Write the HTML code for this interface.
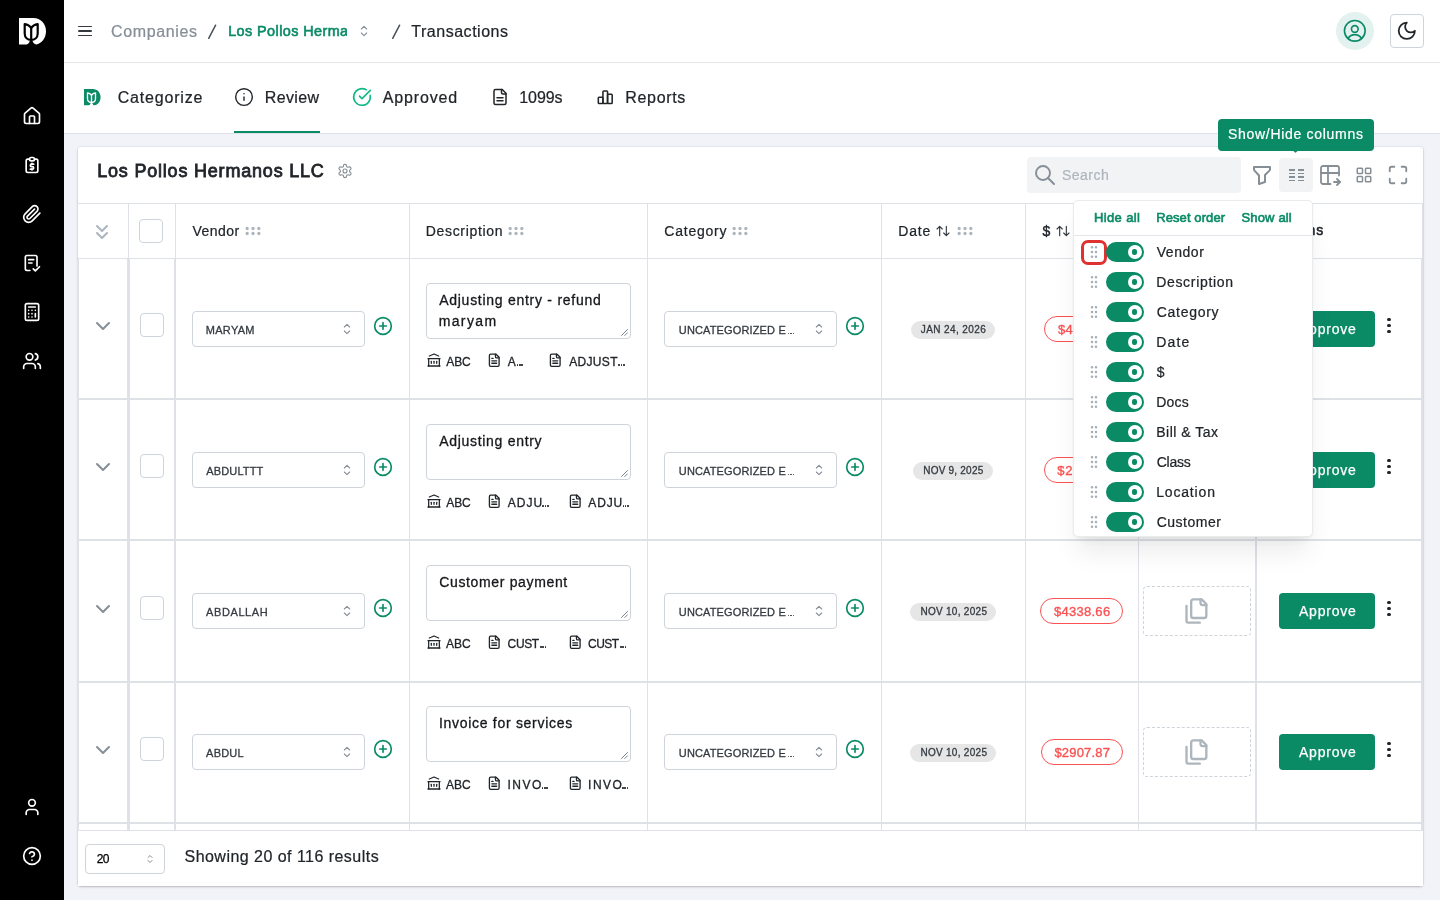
<!DOCTYPE html>
<html><head><meta charset="utf-8"><title>Transactions</title><style>
*{box-sizing:border-box;margin:0;padding:0}
html,body{width:1440px;height:900px;overflow:hidden}
body{font-family:"Liberation Sans",sans-serif;background:#f1f3f9;color:#212529;position:relative;-webkit-font-smoothing:antialiased}
#root{position:absolute;left:0;top:0;width:1440px;height:900px;will-change:transform}
.abs{position:absolute}
.t{position:absolute;white-space:nowrap;line-height:1}
svg{position:absolute;overflow:visible;fill:none;stroke-linecap:round;stroke-linejoin:round}
.sidebar{position:absolute;left:0;top:0;width:64px;height:900px;background:#000}
.sidebar svg{stroke:#fff;stroke-width:2}
.topbar{position:absolute;left:64px;top:0;width:1376px;height:63px;background:#fff;border-bottom:1px solid #e6e7e9}
.tabs{position:absolute;left:64px;top:63px;width:1376px;height:71px;background:#fff;border-bottom:1px solid #dfe1e6}
.card{position:absolute;left:78px;top:147px;width:1345px;height:739px;background:#fff;box-shadow:0 0 0 1px rgba(0,0,0,.04),0 1px 3px rgba(0,0,0,.13),0 1px 2px rgba(0,0,0,.1);border-radius:3px}
.vl{position:absolute;background:#dee2e6;width:1px}
.hl{position:absolute;background:#dee2e6;height:1px}
.cb{position:absolute;width:24px;height:24px;border:1px solid #ced4da;border-radius:4px;background:#fff}
.sel{position:absolute;height:36px;border:1px solid #ced4da;border-radius:4px;background:#fff}
.ta{position:absolute;width:205px;height:56px;border:1px solid #ced4da;border-radius:4px;background:#fff}
.badge{position:absolute;height:18px;border-radius:9px;background:#e6e6e6}
.amt{position:absolute;height:26px;border-radius:13px;border:1px solid #fa5252;background:#fff}
.docs{position:absolute;width:107px;height:49px;border:1px dashed #ced4da;border-radius:4px}
.btn{position:absolute;width:96px;height:36px;border-radius:4px;background:#0b8a66}
.dot{position:absolute;width:4px;height:4px;border-radius:2px;background:#212529}
.sw{position:absolute;width:38px;height:20px;border-radius:10px;background:#0b8a66}
.sw i{position:absolute;left:22px;top:3px;width:14px;height:14px;border-radius:7px;background:#fff}
.sw b{position:absolute;left:26.2px;top:7.2px;width:5px;height:5.8px;border-radius:2.2px;background:#0b8a66}
</style></head><body><div id="root">
<div class="sidebar">
<svg style="left:18.7px;top:17.6px;stroke:none" width="27" height="27" viewBox="0 0 27 27"><path fill="#fff" d="M0 0H14.5C21.5 0 27 5.8 27 13.3C27 20.5 22.5 25.6 17.2 26.6C15.4 26.2 14 24.8 13.5 23H10.7C10.3 24.8 9.3 26 7.6 26.6H0Z"/><path fill="none" stroke="#000" stroke-width="2.2" stroke-linejoin="round" d="M5.7 6.2V15.5C5.7 19.5 8.6 21.9 12.2 22C15.8 21.9 18.7 19.5 18.7 15.5V6.2C15.8 6.6 13.6 7.9 12.2 10C10.8 7.9 8.6 6.6 5.7 6.2Z"/><path fill="none" stroke="#000" stroke-width="2.2" d="M12.2 10V27"/></svg>
<svg style="left:22px;top:106.0px;" width="20" height="20" viewBox="0 0 24 24"><path d="M15 21v-8a1 1 0 0 0-1-1h-4a1 1 0 0 0-1 1v8"/><path d="M3 10a2 2 0 0 1 .709-1.528l7-5.999a2 2 0 0 1 2.582 0l7 5.999A2 2 0 0 1 21 10v9a2 2 0 0 1-2 2H5a2 2 0 0 1-2-2z"/></svg>
<svg style="left:22px;top:155px;" width="20" height="20" viewBox="0 0 24 24"><path d="M9 5H7a2 2 0 0 0-2 2v12a2 2 0 0 0 2 2h10a2 2 0 0 0 2-2V7a2 2 0 0 0-2-2h-2"/><rect x="9" y="3" width="6" height="4" rx="2"/><path d="M14 11h-2.5a1.5 1.5 0 0 0 0 3h1a1.5 1.5 0 0 1 0 3H10"/><path d="M12 17v1m0-8v1"/></svg>
<svg style="left:22px;top:203.9px;" width="20" height="20" viewBox="0 0 24 24"><path d="m21.44 11.05-9.19 9.19a6 6 0 0 1-8.49-8.49l8.57-8.57A4 4 0 1 1 18 8.84l-8.59 8.57a2 2 0 0 1-2.83-2.83l8.49-8.48"/></svg>
<svg style="left:22px;top:253.3px;" width="20" height="20" viewBox="0 0 24 24"><path d="M9.5 21H6a2 2 0 0 1-2-2V5a2 2 0 0 1 2-2h10a2 2 0 0 1 2 2v10.5"/><path d="M8 8h6"/><path d="M8 12h4"/><path d="m13.5 19 2.5 2.5 5-5"/></svg>
<svg style="left:22px;top:301.8px;" width="20" height="20" viewBox="0 0 24 24"><rect x="4" y="2" width="16" height="20" rx="2"/><path d="M8 6h8"/><path d="M16 14v4"/><path d="M16 10h.01M12 10h.01M8 10h.01M12 14h.01M8 14h.01M12 18h.01M8 18h.01"/></svg>
<svg style="left:22px;top:351px;" width="20" height="20" viewBox="0 0 24 24"><path d="M16 21v-2a4 4 0 0 0-4-4H6a4 4 0 0 0-4 4v2"/><circle cx="9" cy="7" r="4"/><path d="M22 21v-2a4 4 0 0 0-3-3.87"/><path d="M16 3.13a4 4 0 0 1 0 7.75"/></svg>
<svg style="left:22px;top:797px;" width="20" height="20" viewBox="0 0 24 24"><path d="M19 21v-2a4 4 0 0 0-4-4H9a4 4 0 0 0-4 4v2"/><circle cx="12" cy="7" r="4"/></svg>
<svg style="left:22px;top:846px;" width="20" height="20" viewBox="0 0 24 24"><circle cx="12" cy="12" r="10"/><path d="M9.09 9a3 3 0 0 1 5.83 1c0 2-3 3-3 3"/><path d="M12 17h.01"/></svg>
</div>
<div class="topbar"></div>
<div class="abs" style="left:78px;top:25.7px;width:14px;height:1.6px;background:#343a40;border-radius:1px"></div>
<div class="abs" style="left:78px;top:30.2px;width:14px;height:1.6px;background:#343a40;border-radius:1px"></div>
<div class="abs" style="left:78px;top:34.7px;width:14px;height:1.6px;background:#343a40;border-radius:1px"></div>
<span class="t" style="left:111px;top:24px;font-size:16px;color:#868e96;font-weight:400;letter-spacing:0.625px;-webkit-text-stroke:0.22px #868e96;">Companies</span>
<svg style="left:200px;top:20px;stroke:#495057;stroke-width:1.5" width="24" height="24" viewBox="0 0 24 24"><path d="M8.7 18.3 15.6 5.2"/></svg>
<span class="abs" style="left:228px;top:20px;width:119px;height:22px;overflow:hidden"><span class="t" style="left:0.2px;top:4px;font-size:14.4px;color:#0b8a66;font-weight:400;letter-spacing:0.423px;-webkit-text-stroke:0.6px #0b8a66;">Los Pollos Hermanos LLC</span></span>
<svg style="left:356px;top:23px;stroke:#868e96;stroke-width:1.6;" width="16" height="16" viewBox="0 0 24 24"><path d="m8 9 4-4 4 4"/><path d="m16 15-4 4-4-4"/></svg>
<svg style="left:384px;top:20px;stroke:#495057;stroke-width:1.5" width="24" height="24" viewBox="0 0 24 24"><path d="M8.7 18.3 15.6 5.2"/></svg>
<span class="t" style="left:411.3px;top:24px;font-size:16px;color:#212529;font-weight:400;letter-spacing:0.518px;-webkit-text-stroke:0.22px #212529;">Transactions</span>
<div class="abs" style="left:1336px;top:12px;width:38px;height:38px;border-radius:19px;background:#e3f2ee"></div>
<svg style="left:1341px;top:16.75px;stroke:#0b8a66;stroke-width:1.4;" width="27.6" height="27.6" viewBox="0 0 24 24"><circle cx="12" cy="12" r="9"/><circle cx="12" cy="10.4" r="2.9"/><path d="M6 18.6C7.6 16.5 9.6 15.35 12 15.35s4.4 1.15 6 3.25"/></svg>
<div class="abs" style="left:1390px;top:14px;width:34px;height:34px;border-radius:4px;border:1px solid #ced4da;background:#fff"></div>
<svg style="left:1396.2px;top:20.1px;stroke:#212529;stroke-width:2;" width="21.6" height="21.6" viewBox="0 0 24 24"><path d="M12 3a6 6 0 0 0 9 9 9 9 0 1 1-9-9Z"/></svg>
<div class="tabs"></div>
<svg style="left:83.7px;top:88.7px;stroke:none" width="16.6" height="16.6" viewBox="0 0 27 27"><path fill="#0b8a66" d="M0 0H14.5C21.5 0 27 5.8 27 13.3C27 20.5 22.5 25.6 17.2 26.6C15.4 26.2 14 24.8 13.5 23H10.7C10.3 24.8 9.3 26 7.6 26.6H0Z"/><path fill="none" stroke="#fff" stroke-width="2.2" stroke-linejoin="round" d="M5.7 6.2V15.5C5.7 19.5 8.6 21.9 12.2 22C15.8 21.9 18.7 19.5 18.7 15.5V6.2C15.8 6.6 13.6 7.9 12.2 10C10.8 7.9 8.6 6.6 5.7 6.2Z"/><path fill="none" stroke="#fff" stroke-width="2.2" d="M12.2 10V27"/></svg>
<span class="t" style="left:117.7px;top:90px;font-size:16px;color:#212529;font-weight:400;letter-spacing:0.811px;-webkit-text-stroke:0.22px #212529;">Categorize</span>
<svg style="left:234px;top:86.8px;stroke:#212529;stroke-width:1.7;" width="20" height="20" viewBox="0 0 24 24"><circle cx="12" cy="12" r="10"/><path d="M12 16v-4"/><path d="M12 8h.01"/></svg>
<span class="t" style="left:264.8px;top:90px;font-size:16px;color:#212529;font-weight:400;letter-spacing:0.34px;-webkit-text-stroke:0.22px #212529;">Review</span>
<div class="abs" style="left:234px;top:131px;width:86px;height:2px;background:#0b8a66"></div>
<svg style="left:352px;top:86.8px;stroke:#12b886;stroke-width:1.9;" width="20" height="20" viewBox="0 0 24 24"><path d="M21.801 10A10 10 0 1 1 17 3.335"/><path d="m9 11 3 3L22 4"/></svg>
<span class="t" style="left:382.8px;top:90px;font-size:16px;color:#212529;font-weight:400;letter-spacing:0.843px;-webkit-text-stroke:0.22px #212529;">Approved</span>
<svg style="left:491px;top:87.8px;stroke:#212529;stroke-width:2;" width="18" height="18" viewBox="0 0 24 24"><path d="M15 2H6a2 2 0 0 0-2 2v16a2 2 0 0 0 2 2h12a2 2 0 0 0 2-2V7Z"/><path d="M14 2v4a2 2 0 0 0 2 2h4"/><path d="M16 13H8"/><path d="M16 17H8"/></svg>
<span class="t" style="left:519.3px;top:90px;font-size:16px;color:#212529;font-weight:400;letter-spacing:-0.075px;-webkit-text-stroke:0.22px #212529;">1099s</span>
<svg style="left:595.5px;top:88px;stroke:#212529;stroke-width:2;" width="18.5" height="18.5" viewBox="0 0 24 24"><rect x="3" y="12" width="6" height="8" rx="1"/><rect x="9" y="4" width="6" height="16" rx="1"/><rect x="15" y="8" width="6" height="12" rx="1"/></svg>
<span class="t" style="left:625.3px;top:90px;font-size:16px;color:#212529;font-weight:400;letter-spacing:0.667px;-webkit-text-stroke:0.22px #212529;">Reports</span>
<div class="card"></div>
<span class="t" style="left:97.2px;top:162px;font-size:18px;color:#212529;font-weight:400;letter-spacing:0.798px;-webkit-text-stroke:0.8px #212529;">Los Pollos Hermanos LLC</span>
<svg style="left:337px;top:163px;stroke:#868e96;stroke-width:1.7;" width="16" height="16" viewBox="0 0 24 24"><path d="M12.22 2h-.44a2 2 0 0 0-2 2v.18a2 2 0 0 1-1 1.73l-.43.25a2 2 0 0 1-2 0l-.15-.08a2 2 0 0 0-2.73.73l-.22.38a2 2 0 0 0 .73 2.73l.15.1a2 2 0 0 1 1 1.72v.51a2 2 0 0 1-1 1.74l-.15.09a2 2 0 0 0-.73 2.73l.22.38a2 2 0 0 0 2.73.73l.15-.08a2 2 0 0 1 2 0l.43.25a2 2 0 0 1 1 1.73V20a2 2 0 0 0 2 2h.44a2 2 0 0 0 2-2v-.18a2 2 0 0 1 1-1.73l.43-.25a2 2 0 0 1 2 0l.15.08a2 2 0 0 0 2.73-.73l.22-.39a2 2 0 0 0-.73-2.73l-.15-.08a2 2 0 0 1-1-1.74v-.5a2 2 0 0 1 1-1.74l.15-.09a2 2 0 0 0 .73-2.73l-.22-.38a2 2 0 0 0-2.73-.73l-.15.08a2 2 0 0 1-2 0l-.43-.25a2 2 0 0 1-1-1.73V4a2 2 0 0 0-2-2z"/><circle cx="12" cy="12" r="3"/></svg>
<div class="abs" style="left:1027px;top:157px;width:214px;height:36px;border-radius:4px;background:#f1f3f5"></div>
<svg style="left:1033px;top:163.4px;stroke:#868e96;stroke-width:1.9;" width="24" height="24" viewBox="0 0 24 24"><circle cx="10" cy="10" r="7"/><path d="m21 21-6-6"/></svg>
<span class="t" style="left:1061.9px;top:168px;font-size:14px;color:#adb5bd;font-weight:400;letter-spacing:0.5px;-webkit-text-stroke:0.22px #adb5bd;">Search</span>
<svg style="left:1250px;top:163.2px;stroke:#868e96;stroke-width:2;" width="24" height="24" viewBox="0 0 24 24"><path d="M4 4h16v2.172a2 2 0 0 1-.586 1.414L15 12v7l-6 2v-8.5L4.52 7.572A2 2 0 0 1 4 6.227z"/></svg>
<div class="abs" style="left:1279px;top:158px;width:34px;height:34px;border-radius:4px;background:#f1f3f5"></div>
<div class="abs" style="left:1288.5px;top:169.4px;width:6px;height:1.6px;background:#868e96"></div>
<div class="abs" style="left:1288.5px;top:172.9px;width:6px;height:1.6px;background:#868e96"></div>
<div class="abs" style="left:1288.5px;top:176.4px;width:6px;height:1.6px;background:#868e96"></div>
<div class="abs" style="left:1288.5px;top:179.9px;width:6px;height:1.6px;background:#868e96"></div>
<div class="abs" style="left:1297.7px;top:169.4px;width:6px;height:1.6px;background:#868e96"></div>
<div class="abs" style="left:1297.7px;top:172.9px;width:6px;height:1.6px;background:#868e96"></div>
<div class="abs" style="left:1297.7px;top:176.4px;width:6px;height:1.6px;background:#868e96"></div>
<div class="abs" style="left:1297.7px;top:179.9px;width:6px;height:1.6px;background:#868e96"></div>
<svg style="left:1318px;top:163px;stroke:#868e96;stroke-width:1.8;" width="24" height="24" viewBox="0 0 24 24"><path d="M12.5 21H5a2 2 0 0 1-2-2V5a2 2 0 0 1 2-2h14a2 2 0 0 1 2 2v7.5"/><path d="M3 10h18"/><path d="M10 3v18"/><path d="M16 19h6"/><path d="m19 16 3 3-3 3"/></svg>
<svg style="left:1355px;top:166px;stroke:#868e96;stroke-width:2;" width="18" height="18" viewBox="0 0 24 24"><rect x="3" y="3" width="7" height="7" rx="1"/><rect x="14" y="3" width="7" height="7" rx="1"/><rect x="14" y="14" width="7" height="7" rx="1"/><rect x="3" y="14" width="7" height="7" rx="1"/></svg>
<svg style="left:1387px;top:164px;stroke:#868e96;stroke-width:2;" width="22" height="22" viewBox="0 0 24 24"><path d="M8 3H5a2 2 0 0 0-2 2v3"/><path d="M21 8V5a2 2 0 0 0-2-2h-3"/><path d="M3 16v3a2 2 0 0 0 2 2h3"/><path d="M16 21h3a2 2 0 0 0 2-2v-3"/></svg>
<div class="hl" style="left:78px;top:203px;width:1345px"></div>
<div class="hl" style="left:78px;top:258px;width:1345px"></div>
<div class="vl" style="left:128px;top:204px;height:54px"></div>
<div class="vl" style="left:175px;top:204px;height:54px"></div>
<div class="vl" style="left:409px;top:204px;height:54px"></div>
<div class="vl" style="left:647px;top:204px;height:54px"></div>
<div class="vl" style="left:881px;top:204px;height:54px"></div>
<div class="vl" style="left:1025px;top:204px;height:54px"></div>
<div class="vl" style="left:1138px;top:204px;height:54px"></div>
<div class="vl" style="left:1255px;top:204px;height:54px"></div>
<div class="vl" style="left:1422px;top:204px;height:54px"></div>
<div class="vl" style="left:77px;top:259px;height:571px;width:2px"></div>
<div class="vl" style="left:127px;top:259px;height:571px;width:3px"></div>
<div class="vl" style="left:174px;top:259px;height:571px;width:2px"></div>
<div class="vl" style="left:409px;top:259px;height:571px;width:1px"></div>
<div class="vl" style="left:647px;top:259px;height:571px;width:1px"></div>
<div class="vl" style="left:881px;top:259px;height:571px;width:1px"></div>
<div class="vl" style="left:1025px;top:259px;height:571px;width:1px"></div>
<div class="vl" style="left:1138px;top:259px;height:571px;width:1px"></div>
<div class="vl" style="left:1255px;top:259px;height:571px;width:2px"></div>
<div class="vl" style="left:1421px;top:259px;height:571px;width:2px"></div>
<div class="hl" style="left:78px;top:398px;width:1345px;height:2px"></div>
<div class="hl" style="left:78px;top:539px;width:1345px;height:2px"></div>
<div class="hl" style="left:78px;top:681px;width:1345px;height:2px"></div>
<div class="hl" style="left:78px;top:822px;width:1345px;height:2px"></div>
<svg style="left:90px;top:219.5px;stroke:#adb5bd;stroke-width:2;" width="24" height="24" viewBox="0 0 24 24"><path d="m7 6 5 5 5-5"/><path d="m7 13 5 5 5-5"/></svg>
<div class="cb" style="left:139px;top:219px"></div>
<span class="t" style="left:192.5px;top:224px;font-size:14px;color:#212529;font-weight:400;letter-spacing:0.44px;-webkit-text-stroke:0.22px #212529;">Vendor</span>
<svg style="left:243.0px;top:221.4px;stroke:#adb5bd;stroke-width:2;" width="20" height="20" viewBox="0 0 24 24"><circle cx="5" cy="9" r="1"/><circle cx="12" cy="9" r="1"/><circle cx="19" cy="9" r="1"/><circle cx="5" cy="15" r="1"/><circle cx="12" cy="15" r="1"/><circle cx="19" cy="15" r="1"/></svg>
<span class="t" style="left:425.75px;top:224px;font-size:14px;color:#212529;font-weight:400;letter-spacing:0.675px;-webkit-text-stroke:0.22px #212529;">Description</span>
<svg style="left:505.7px;top:221.4px;stroke:#adb5bd;stroke-width:2;" width="20" height="20" viewBox="0 0 24 24"><circle cx="5" cy="9" r="1"/><circle cx="12" cy="9" r="1"/><circle cx="19" cy="9" r="1"/><circle cx="5" cy="15" r="1"/><circle cx="12" cy="15" r="1"/><circle cx="19" cy="15" r="1"/></svg>
<span class="t" style="left:664.25px;top:224px;font-size:14px;color:#212529;font-weight:400;letter-spacing:0.786px;-webkit-text-stroke:0.22px #212529;">Category</span>
<svg style="left:730.0px;top:221.4px;stroke:#adb5bd;stroke-width:2;" width="20" height="20" viewBox="0 0 24 24"><circle cx="5" cy="9" r="1"/><circle cx="12" cy="9" r="1"/><circle cx="19" cy="9" r="1"/><circle cx="5" cy="15" r="1"/><circle cx="12" cy="15" r="1"/><circle cx="19" cy="15" r="1"/></svg>
<span class="t" style="left:898.2px;top:224px;font-size:14px;color:#212529;font-weight:400;letter-spacing:0.833px;-webkit-text-stroke:0.22px #212529;">Date</span>
<svg style="left:935.4px;top:223.1px;stroke:#343a40;stroke-width:1.7;" width="16" height="16" viewBox="0 0 24 24"><path d="m3 9 4-4 4 4m-4-4v14"/><path d="m21 15-4 4-4-4m4 4V5"/></svg>
<svg style="left:955.0px;top:221.4px;stroke:#adb5bd;stroke-width:2;" width="20" height="20" viewBox="0 0 24 24"><circle cx="5" cy="9" r="1"/><circle cx="12" cy="9" r="1"/><circle cx="19" cy="9" r="1"/><circle cx="5" cy="15" r="1"/><circle cx="12" cy="15" r="1"/><circle cx="19" cy="15" r="1"/></svg>
<span class="t" style="left:1042.5px;top:224px;font-size:14px;color:#212529;font-weight:400;letter-spacing:-0.5px;-webkit-text-stroke:0.4px #212529;">$</span>
<svg style="left:1055.4px;top:223.1px;stroke:#343a40;stroke-width:1.7;" width="16" height="16" viewBox="0 0 24 24"><path d="m3 9 4-4 4 4m-4-4v14"/><path d="m21 15-4 4-4-4m4 4V5"/></svg>
<span class="t" style="left:1272.5px;top:223px;font-size:14px;color:#212529;font-weight:400;letter-spacing:0.8px;-webkit-text-stroke:0.55px #212529;">Actions</span>
<svg style="left:91px;top:314px;stroke:#868e96;stroke-width:2;" width="24" height="24" viewBox="0 0 24 24"><path d="m6 9 6 6 6-6"/></svg>
<div class="cb" style="left:140px;top:313px"></div>
<div class="sel" style="left:192px;top:311px;width:173px"></div>
<span class="t" style="left:205.8px;top:325px;font-size:11px;color:#343a40;font-weight:400;letter-spacing:0.28px;-webkit-text-stroke:0.3px #343a40;">MARYAM</span>
<svg style="left:339px;top:321px;stroke:#868e96;stroke-width:1.6;" width="16" height="16" viewBox="0 0 24 24"><path d="m8 9 4-4 4 4"/><path d="m16 15-4 4-4-4"/></svg>
<svg style="left:373px;top:316px;stroke:#0b8a66;stroke-width:2;" width="20" height="20" viewBox="0 0 24 24"><circle cx="12" cy="12" r="10"/><path d="M8 12h8"/><path d="M12 8v8"/></svg>
<div class="ta" style="left:426px;top:283px"></div>
<span class="t" style="left:439.2px;top:293px;font-size:14px;color:#15171a;font-weight:400;letter-spacing:0.73px;-webkit-text-stroke:0.3px #15171a;">Adjusting entry - refund</span>
<span class="t" style="left:438.7px;top:314px;font-size:14px;color:#15171a;font-weight:400;letter-spacing:1.36px;-webkit-text-stroke:0.3px #15171a;">maryam</span>
<svg style="left:621px;top:329px;stroke:#6c757d;stroke-width:.9" width="7" height="7" viewBox="0 0 7 7"><path d="M.5 6.5 6.5.5M3.8 6.5 6.5 3.8"/></svg>
<svg style="left:426.2px;top:351.5px;stroke:#212529;stroke-width:1.9;" width="16" height="16" viewBox="0 0 24 24"><path d="M3 21h18"/><path d="M3 10h18"/><path d="m5 6 7-3 7 3"/><path d="M4 10v11"/><path d="M20 10v11"/><path d="M8 14v3"/><path d="M12 14v3"/><path d="M16 14v3"/></svg>
<span class="t" style="left:446.3px;top:356px;font-size:12px;color:#212529;font-weight:400;letter-spacing:-0.15px;-webkit-text-stroke:0.3px #212529;">ABC</span>
<svg style="left:486.90000000000003px;top:352.6px;stroke:#212529;stroke-width:2.2;" width="14.5" height="14.5" viewBox="0 0 24 24"><path d="M15 2H6a2 2 0 0 0-2 2v16a2 2 0 0 0 2 2h12a2 2 0 0 0 2-2V7Z"/><path d="M14 2v4a2 2 0 0 0 2 2h4"/><path d="M10 9H8"/><path d="M16 13H8"/><path d="M16 17H8"/></svg>
<span class="t" style="left:507.8px;top:356px;font-size:12px;color:#212529;font-weight:400;letter-spacing:-0.1px;-webkit-text-stroke:0.3px #212529;">A</span><div class="abs" style="left:516.70px;top:364.46px;width:1.54px;height:1.54px;border-radius:50%;background:#212529"></div><div class="abs" style="left:519.08px;top:364.46px;width:1.54px;height:1.54px;border-radius:50%;background:#212529"></div><div class="abs" style="left:521.46px;top:364.46px;width:1.54px;height:1.54px;border-radius:50%;background:#212529"></div>
<svg style="left:548.1px;top:352.6px;stroke:#212529;stroke-width:2.2;" width="14.5" height="14.5" viewBox="0 0 24 24"><path d="M15 2H6a2 2 0 0 0-2 2v16a2 2 0 0 0 2 2h12a2 2 0 0 0 2-2V7Z"/><path d="M14 2v4a2 2 0 0 0 2 2h4"/><path d="M10 9H8"/><path d="M16 13H8"/><path d="M16 17H8"/></svg>
<span class="t" style="left:569.2px;top:356px;font-size:12px;color:#212529;font-weight:400;letter-spacing:0.32px;-webkit-text-stroke:0.3px #212529;">ADJUST</span><div class="abs" style="left:618.40px;top:364.46px;width:1.54px;height:1.54px;border-radius:50%;background:#212529"></div><div class="abs" style="left:620.78px;top:364.46px;width:1.54px;height:1.54px;border-radius:50%;background:#212529"></div><div class="abs" style="left:623.16px;top:364.46px;width:1.54px;height:1.54px;border-radius:50%;background:#212529"></div>
<div class="sel" style="left:664px;top:311px;width:173px"></div>
<span class="t" style="left:678.8px;top:325px;font-size:11px;color:#343a40;font-weight:400;letter-spacing:0.143px;-webkit-text-stroke:0.3px #343a40;">UNCATEGORIZED E</span><div class="abs" style="left:787.60px;top:332.59px;width:1.41px;height:1.41px;border-radius:50%;background:#343a40"></div><div class="abs" style="left:790.20px;top:332.59px;width:1.41px;height:1.41px;border-radius:50%;background:#343a40"></div><div class="abs" style="left:792.79px;top:332.59px;width:1.41px;height:1.41px;border-radius:50%;background:#343a40"></div>
<svg style="left:811.2px;top:321px;stroke:#868e96;stroke-width:1.6;" width="16" height="16" viewBox="0 0 24 24"><path d="m8 9 4-4 4 4"/><path d="m16 15-4 4-4-4"/></svg>
<svg style="left:845px;top:316px;stroke:#0b8a66;stroke-width:2;" width="20" height="20" viewBox="0 0 24 24"><circle cx="12" cy="12" r="10"/><path d="M8 12h8"/><path d="M12 8v8"/></svg>
<div class="badge" style="left:911px;top:321px;width:84px"></div>
<span class="t" style="left:920.8px;top:325px;font-size:10px;color:#343a40;font-weight:400;letter-spacing:0.4px;-webkit-text-stroke:0.3px #343a40;">JAN 24, 2026</span>
<div class="amt" style="left:1044px;top:316px;width:76px"></div>
<span class="t" style="left:1058px;top:323px;font-size:13px;color:#fa5252;font-weight:400;letter-spacing:0.2px;-webkit-text-stroke:0.35px #fa5252;">$4</span>
<div class="docs" style="left:1143px;top:304px;width:108px;height:50px"></div>
<svg style="left:1182.7px;top:314.7px;stroke:#adb5bd;stroke-width:2;" width="28" height="28" viewBox="0 0 24 24"><path d="M20 7h-3a2 2 0 0 1-2-2V2"/><path d="M9 18a2 2 0 0 1-2-2V4a2 2 0 0 1 2-2h7l4 4v10a2 2 0 0 1-2 2Z"/><path d="M3 7.6v12.8A1.6 1.6 0 0 0 4.6 22h9.8"/></svg>
<div class="btn" style="left:1279px;top:311px"></div>
<span class="t" style="left:1299px;top:322px;font-size:14px;color:#fff;font-weight:400;letter-spacing:0.767px;-webkit-text-stroke:0.25px #fff;">Approve</span>
<div class="dot" style="left:1387.1px;top:317.6px;width:3.6px;height:3.6px"></div>
<div class="dot" style="left:1387.1px;top:323.6px;width:3.6px;height:3.6px"></div>
<div class="dot" style="left:1387.1px;top:329.6px;width:3.6px;height:3.6px"></div>
<svg style="left:91px;top:455px;stroke:#868e96;stroke-width:2;" width="24" height="24" viewBox="0 0 24 24"><path d="m6 9 6 6 6-6"/></svg>
<div class="cb" style="left:140px;top:454px"></div>
<div class="sel" style="left:192px;top:452px;width:173px"></div>
<span class="t" style="left:206.3px;top:466px;font-size:11px;color:#343a40;font-weight:400;letter-spacing:0.143px;-webkit-text-stroke:0.3px #343a40;">ABDULTTT</span>
<svg style="left:339px;top:462px;stroke:#868e96;stroke-width:1.6;" width="16" height="16" viewBox="0 0 24 24"><path d="m8 9 4-4 4 4"/><path d="m16 15-4 4-4-4"/></svg>
<svg style="left:373px;top:457px;stroke:#0b8a66;stroke-width:2;" width="20" height="20" viewBox="0 0 24 24"><circle cx="12" cy="12" r="10"/><path d="M8 12h8"/><path d="M12 8v8"/></svg>
<div class="ta" style="left:426px;top:424px"></div>
<span class="t" style="left:439.2px;top:434px;font-size:14px;color:#15171a;font-weight:400;letter-spacing:0.7px;-webkit-text-stroke:0.3px #15171a;">Adjusting entry</span>
<svg style="left:621px;top:470px;stroke:#6c757d;stroke-width:.9" width="7" height="7" viewBox="0 0 7 7"><path d="M.5 6.5 6.5.5M3.8 6.5 6.5 3.8"/></svg>
<svg style="left:426.2px;top:492.5px;stroke:#212529;stroke-width:1.9;" width="16" height="16" viewBox="0 0 24 24"><path d="M3 21h18"/><path d="M3 10h18"/><path d="m5 6 7-3 7 3"/><path d="M4 10v11"/><path d="M20 10v11"/><path d="M8 14v3"/><path d="M12 14v3"/><path d="M16 14v3"/></svg>
<span class="t" style="left:446.3px;top:497px;font-size:12px;color:#212529;font-weight:400;letter-spacing:-0.15px;-webkit-text-stroke:0.3px #212529;">ABC</span>
<svg style="left:486.90000000000003px;top:493.6px;stroke:#212529;stroke-width:2.2;" width="14.5" height="14.5" viewBox="0 0 24 24"><path d="M15 2H6a2 2 0 0 0-2 2v16a2 2 0 0 0 2 2h12a2 2 0 0 0 2-2V7Z"/><path d="M14 2v4a2 2 0 0 0 2 2h4"/><path d="M10 9H8"/><path d="M16 13H8"/><path d="M16 17H8"/></svg>
<span class="t" style="left:507.8px;top:497px;font-size:12px;color:#212529;font-weight:400;letter-spacing:1.0px;-webkit-text-stroke:0.3px #212529;">ADJU</span><div class="abs" style="left:542.40px;top:505.46px;width:1.54px;height:1.54px;border-radius:50%;background:#212529"></div><div class="abs" style="left:544.78px;top:505.46px;width:1.54px;height:1.54px;border-radius:50%;background:#212529"></div><div class="abs" style="left:547.16px;top:505.46px;width:1.54px;height:1.54px;border-radius:50%;background:#212529"></div>
<svg style="left:568.1px;top:493.6px;stroke:#212529;stroke-width:2.2;" width="14.5" height="14.5" viewBox="0 0 24 24"><path d="M15 2H6a2 2 0 0 0-2 2v16a2 2 0 0 0 2 2h12a2 2 0 0 0 2-2V7Z"/><path d="M14 2v4a2 2 0 0 0 2 2h4"/><path d="M10 9H8"/><path d="M16 13H8"/><path d="M16 17H8"/></svg>
<span class="t" style="left:588.3px;top:497px;font-size:12px;color:#212529;font-weight:400;letter-spacing:0.867px;-webkit-text-stroke:0.3px #212529;">ADJU</span><div class="abs" style="left:622.50px;top:505.46px;width:1.54px;height:1.54px;border-radius:50%;background:#212529"></div><div class="abs" style="left:624.88px;top:505.46px;width:1.54px;height:1.54px;border-radius:50%;background:#212529"></div><div class="abs" style="left:627.26px;top:505.46px;width:1.54px;height:1.54px;border-radius:50%;background:#212529"></div>
<div class="sel" style="left:664px;top:452px;width:173px"></div>
<span class="t" style="left:678.8px;top:466px;font-size:11px;color:#343a40;font-weight:400;letter-spacing:0.143px;-webkit-text-stroke:0.3px #343a40;">UNCATEGORIZED E</span><div class="abs" style="left:787.60px;top:473.59px;width:1.41px;height:1.41px;border-radius:50%;background:#343a40"></div><div class="abs" style="left:790.20px;top:473.59px;width:1.41px;height:1.41px;border-radius:50%;background:#343a40"></div><div class="abs" style="left:792.79px;top:473.59px;width:1.41px;height:1.41px;border-radius:50%;background:#343a40"></div>
<svg style="left:811.2px;top:462px;stroke:#868e96;stroke-width:1.6;" width="16" height="16" viewBox="0 0 24 24"><path d="m8 9 4-4 4 4"/><path d="m16 15-4 4-4-4"/></svg>
<svg style="left:845px;top:457px;stroke:#0b8a66;stroke-width:2;" width="20" height="20" viewBox="0 0 24 24"><circle cx="12" cy="12" r="10"/><path d="M8 12h8"/><path d="M12 8v8"/></svg>
<div class="badge" style="left:913px;top:462px;width:80px"></div>
<span class="t" style="left:923.3px;top:466px;font-size:10px;color:#343a40;font-weight:400;letter-spacing:0.21px;-webkit-text-stroke:0.3px #343a40;">NOV 9, 2025</span>
<div class="amt" style="left:1044px;top:457px;width:76px"></div>
<span class="t" style="left:1057.2px;top:464px;font-size:13px;color:#fa5252;font-weight:400;letter-spacing:0.8px;-webkit-text-stroke:0.35px #fa5252;">$2</span>
<div class="docs" style="left:1143px;top:445px;width:108px;height:50px"></div>
<svg style="left:1182.7px;top:455.7px;stroke:#adb5bd;stroke-width:2;" width="28" height="28" viewBox="0 0 24 24"><path d="M20 7h-3a2 2 0 0 1-2-2V2"/><path d="M9 18a2 2 0 0 1-2-2V4a2 2 0 0 1 2-2h7l4 4v10a2 2 0 0 1-2 2Z"/><path d="M3 7.6v12.8A1.6 1.6 0 0 0 4.6 22h9.8"/></svg>
<div class="btn" style="left:1279px;top:452px"></div>
<span class="t" style="left:1299px;top:463px;font-size:14px;color:#fff;font-weight:400;letter-spacing:0.767px;-webkit-text-stroke:0.25px #fff;">Approve</span>
<div class="dot" style="left:1387.1px;top:458.6px;width:3.6px;height:3.6px"></div>
<div class="dot" style="left:1387.1px;top:464.6px;width:3.6px;height:3.6px"></div>
<div class="dot" style="left:1387.1px;top:470.6px;width:3.6px;height:3.6px"></div>
<svg style="left:91px;top:597px;stroke:#868e96;stroke-width:2;" width="24" height="24" viewBox="0 0 24 24"><path d="m6 9 6 6 6-6"/></svg>
<div class="cb" style="left:140px;top:596px"></div>
<div class="sel" style="left:192px;top:593px;width:173px"></div>
<span class="t" style="left:206.1px;top:607px;font-size:11px;color:#343a40;font-weight:400;letter-spacing:0.586px;-webkit-text-stroke:0.3px #343a40;">ABDALLAH</span>
<svg style="left:339px;top:603px;stroke:#868e96;stroke-width:1.6;" width="16" height="16" viewBox="0 0 24 24"><path d="m8 9 4-4 4 4"/><path d="m16 15-4 4-4-4"/></svg>
<svg style="left:373px;top:598px;stroke:#0b8a66;stroke-width:2;" width="20" height="20" viewBox="0 0 24 24"><circle cx="12" cy="12" r="10"/><path d="M8 12h8"/><path d="M12 8v8"/></svg>
<div class="ta" style="left:426px;top:565px"></div>
<span class="t" style="left:439.2px;top:575px;font-size:14px;color:#15171a;font-weight:400;letter-spacing:0.653px;-webkit-text-stroke:0.3px #15171a;">Customer payment</span>
<svg style="left:621px;top:611px;stroke:#6c757d;stroke-width:.9" width="7" height="7" viewBox="0 0 7 7"><path d="M.5 6.5 6.5.5M3.8 6.5 6.5 3.8"/></svg>
<svg style="left:426.2px;top:633.5px;stroke:#212529;stroke-width:1.9;" width="16" height="16" viewBox="0 0 24 24"><path d="M3 21h18"/><path d="M3 10h18"/><path d="m5 6 7-3 7 3"/><path d="M4 10v11"/><path d="M20 10v11"/><path d="M8 14v3"/><path d="M12 14v3"/><path d="M16 14v3"/></svg>
<span class="t" style="left:446px;top:638px;font-size:12px;color:#212529;font-weight:400;letter-spacing:0.0px;-webkit-text-stroke:0.3px #212529;">ABC</span>
<svg style="left:487.0px;top:634.6px;stroke:#212529;stroke-width:2.2;" width="14.5" height="14.5" viewBox="0 0 24 24"><path d="M15 2H6a2 2 0 0 0-2 2v16a2 2 0 0 0 2 2h12a2 2 0 0 0 2-2V7Z"/><path d="M14 2v4a2 2 0 0 0 2 2h4"/><path d="M10 9H8"/><path d="M16 13H8"/><path d="M16 17H8"/></svg>
<span class="t" style="left:507.6px;top:638px;font-size:12px;color:#212529;font-weight:400;letter-spacing:-0.367px;-webkit-text-stroke:0.3px #212529;">CUST</span><div class="abs" style="left:540.10px;top:646.46px;width:1.54px;height:1.54px;border-radius:50%;background:#212529"></div><div class="abs" style="left:542.48px;top:646.46px;width:1.54px;height:1.54px;border-radius:50%;background:#212529"></div><div class="abs" style="left:544.86px;top:646.46px;width:1.54px;height:1.54px;border-radius:50%;background:#212529"></div>
<svg style="left:568.0px;top:634.6px;stroke:#212529;stroke-width:2.2;" width="14.5" height="14.5" viewBox="0 0 24 24"><path d="M15 2H6a2 2 0 0 0-2 2v16a2 2 0 0 0 2 2h12a2 2 0 0 0 2-2V7Z"/><path d="M14 2v4a2 2 0 0 0 2 2h4"/><path d="M10 9H8"/><path d="M16 13H8"/><path d="M16 17H8"/></svg>
<span class="t" style="left:588px;top:638px;font-size:12px;color:#212529;font-weight:400;letter-spacing:-0.5px;-webkit-text-stroke:0.3px #212529;">CUST</span><div class="abs" style="left:620.10px;top:646.46px;width:1.54px;height:1.54px;border-radius:50%;background:#212529"></div><div class="abs" style="left:622.48px;top:646.46px;width:1.54px;height:1.54px;border-radius:50%;background:#212529"></div><div class="abs" style="left:624.86px;top:646.46px;width:1.54px;height:1.54px;border-radius:50%;background:#212529"></div>
<div class="sel" style="left:664px;top:593px;width:173px"></div>
<span class="t" style="left:678.8px;top:607px;font-size:11px;color:#343a40;font-weight:400;letter-spacing:0.143px;-webkit-text-stroke:0.3px #343a40;">UNCATEGORIZED E</span><div class="abs" style="left:787.60px;top:614.59px;width:1.41px;height:1.41px;border-radius:50%;background:#343a40"></div><div class="abs" style="left:790.20px;top:614.59px;width:1.41px;height:1.41px;border-radius:50%;background:#343a40"></div><div class="abs" style="left:792.79px;top:614.59px;width:1.41px;height:1.41px;border-radius:50%;background:#343a40"></div>
<svg style="left:811.2px;top:603px;stroke:#868e96;stroke-width:1.6;" width="16" height="16" viewBox="0 0 24 24"><path d="m8 9 4-4 4 4"/><path d="m16 15-4 4-4-4"/></svg>
<svg style="left:845px;top:598px;stroke:#0b8a66;stroke-width:2;" width="20" height="20" viewBox="0 0 24 24"><circle cx="12" cy="12" r="10"/><path d="M8 12h8"/><path d="M12 8v8"/></svg>
<div class="badge" style="left:910px;top:603px;width:86px"></div>
<span class="t" style="left:920.4px;top:607px;font-size:10px;color:#343a40;font-weight:400;letter-spacing:0.291px;-webkit-text-stroke:0.3px #343a40;">NOV 10, 2025</span>
<div class="amt" style="left:1040px;top:598px;width:83px"></div>
<span class="t" style="left:1053.9px;top:605px;font-size:13px;color:#fa5252;font-weight:400;letter-spacing:0.286px;-webkit-text-stroke:0.35px #fa5252;">$4338.66</span>
<div class="docs" style="left:1143px;top:586px;width:108px;height:50px"></div>
<svg style="left:1182.7px;top:596.7px;stroke:#adb5bd;stroke-width:2;" width="28" height="28" viewBox="0 0 24 24"><path d="M20 7h-3a2 2 0 0 1-2-2V2"/><path d="M9 18a2 2 0 0 1-2-2V4a2 2 0 0 1 2-2h7l4 4v10a2 2 0 0 1-2 2Z"/><path d="M3 7.6v12.8A1.6 1.6 0 0 0 4.6 22h9.8"/></svg>
<div class="btn" style="left:1279px;top:593px"></div>
<span class="t" style="left:1299px;top:604px;font-size:14px;color:#fff;font-weight:400;letter-spacing:0.767px;-webkit-text-stroke:0.25px #fff;">Approve</span>
<div class="dot" style="left:1387.1px;top:600.6px;width:3.6px;height:3.6px"></div>
<div class="dot" style="left:1387.1px;top:606.6px;width:3.6px;height:3.6px"></div>
<div class="dot" style="left:1387.1px;top:612.6px;width:3.6px;height:3.6px"></div>
<svg style="left:91px;top:738px;stroke:#868e96;stroke-width:2;" width="24" height="24" viewBox="0 0 24 24"><path d="m6 9 6 6 6-6"/></svg>
<div class="cb" style="left:140px;top:737px"></div>
<div class="sel" style="left:192px;top:734px;width:173px"></div>
<span class="t" style="left:206.1px;top:748px;font-size:11px;color:#343a40;font-weight:400;letter-spacing:0.2px;-webkit-text-stroke:0.3px #343a40;">ABDUL</span>
<svg style="left:339px;top:744px;stroke:#868e96;stroke-width:1.6;" width="16" height="16" viewBox="0 0 24 24"><path d="m8 9 4-4 4 4"/><path d="m16 15-4 4-4-4"/></svg>
<svg style="left:373px;top:739px;stroke:#0b8a66;stroke-width:2;" width="20" height="20" viewBox="0 0 24 24"><circle cx="12" cy="12" r="10"/><path d="M8 12h8"/><path d="M12 8v8"/></svg>
<div class="ta" style="left:426px;top:706px"></div>
<span class="t" style="left:438.9px;top:716px;font-size:14px;color:#15171a;font-weight:400;letter-spacing:0.711px;-webkit-text-stroke:0.3px #15171a;">Invoice for services</span>
<svg style="left:621px;top:752px;stroke:#6c757d;stroke-width:.9" width="7" height="7" viewBox="0 0 7 7"><path d="M.5 6.5 6.5.5M3.8 6.5 6.5 3.8"/></svg>
<svg style="left:426.2px;top:774.5px;stroke:#212529;stroke-width:1.9;" width="16" height="16" viewBox="0 0 24 24"><path d="M3 21h18"/><path d="M3 10h18"/><path d="m5 6 7-3 7 3"/><path d="M4 10v11"/><path d="M20 10v11"/><path d="M8 14v3"/><path d="M12 14v3"/><path d="M16 14v3"/></svg>
<span class="t" style="left:446px;top:779px;font-size:12px;color:#212529;font-weight:400;letter-spacing:0.0px;-webkit-text-stroke:0.3px #212529;">ABC</span>
<svg style="left:487.0px;top:775.6px;stroke:#212529;stroke-width:2.2;" width="14.5" height="14.5" viewBox="0 0 24 24"><path d="M15 2H6a2 2 0 0 0-2 2v16a2 2 0 0 0 2 2h12a2 2 0 0 0 2-2V7Z"/><path d="M14 2v4a2 2 0 0 0 2 2h4"/><path d="M10 9H8"/><path d="M16 13H8"/><path d="M16 17H8"/></svg>
<span class="t" style="left:507.5px;top:779px;font-size:12px;color:#212529;font-weight:400;letter-spacing:1.533px;-webkit-text-stroke:0.3px #212529;">INVO</span><div class="abs" style="left:541.70px;top:787.46px;width:1.54px;height:1.54px;border-radius:50%;background:#212529"></div><div class="abs" style="left:544.08px;top:787.46px;width:1.54px;height:1.54px;border-radius:50%;background:#212529"></div><div class="abs" style="left:546.46px;top:787.46px;width:1.54px;height:1.54px;border-radius:50%;background:#212529"></div>
<svg style="left:568.0px;top:775.6px;stroke:#212529;stroke-width:2.2;" width="14.5" height="14.5" viewBox="0 0 24 24"><path d="M15 2H6a2 2 0 0 0-2 2v16a2 2 0 0 0 2 2h12a2 2 0 0 0 2-2V7Z"/><path d="M14 2v4a2 2 0 0 0 2 2h4"/><path d="M10 9H8"/><path d="M16 13H8"/><path d="M16 17H8"/></svg>
<span class="t" style="left:588.1px;top:779px;font-size:12px;color:#212529;font-weight:400;letter-spacing:1.467px;-webkit-text-stroke:0.3px #212529;">INVO</span><div class="abs" style="left:622.10px;top:787.46px;width:1.54px;height:1.54px;border-radius:50%;background:#212529"></div><div class="abs" style="left:624.48px;top:787.46px;width:1.54px;height:1.54px;border-radius:50%;background:#212529"></div><div class="abs" style="left:626.86px;top:787.46px;width:1.54px;height:1.54px;border-radius:50%;background:#212529"></div>
<div class="sel" style="left:664px;top:734px;width:173px"></div>
<span class="t" style="left:678.8px;top:748px;font-size:11px;color:#343a40;font-weight:400;letter-spacing:0.143px;-webkit-text-stroke:0.3px #343a40;">UNCATEGORIZED E</span><div class="abs" style="left:787.60px;top:755.59px;width:1.41px;height:1.41px;border-radius:50%;background:#343a40"></div><div class="abs" style="left:790.20px;top:755.59px;width:1.41px;height:1.41px;border-radius:50%;background:#343a40"></div><div class="abs" style="left:792.79px;top:755.59px;width:1.41px;height:1.41px;border-radius:50%;background:#343a40"></div>
<svg style="left:811.2px;top:744px;stroke:#868e96;stroke-width:1.6;" width="16" height="16" viewBox="0 0 24 24"><path d="m8 9 4-4 4 4"/><path d="m16 15-4 4-4-4"/></svg>
<svg style="left:845px;top:739px;stroke:#0b8a66;stroke-width:2;" width="20" height="20" viewBox="0 0 24 24"><circle cx="12" cy="12" r="10"/><path d="M8 12h8"/><path d="M12 8v8"/></svg>
<div class="badge" style="left:910px;top:744px;width:86px"></div>
<span class="t" style="left:920.4px;top:748px;font-size:10px;color:#343a40;font-weight:400;letter-spacing:0.291px;-webkit-text-stroke:0.3px #343a40;">NOV 10, 2025</span>
<div class="amt" style="left:1041px;top:739px;width:82px"></div>
<span class="t" style="left:1054.4px;top:746px;font-size:13px;color:#fa5252;font-weight:400;letter-spacing:0.186px;-webkit-text-stroke:0.35px #fa5252;">$2907.87</span>
<div class="docs" style="left:1143px;top:727px;width:108px;height:50px"></div>
<svg style="left:1182.7px;top:737.7px;stroke:#adb5bd;stroke-width:2;" width="28" height="28" viewBox="0 0 24 24"><path d="M20 7h-3a2 2 0 0 1-2-2V2"/><path d="M9 18a2 2 0 0 1-2-2V4a2 2 0 0 1 2-2h7l4 4v10a2 2 0 0 1-2 2Z"/><path d="M3 7.6v12.8A1.6 1.6 0 0 0 4.6 22h9.8"/></svg>
<div class="btn" style="left:1279px;top:734px"></div>
<span class="t" style="left:1299px;top:745px;font-size:14px;color:#fff;font-weight:400;letter-spacing:0.767px;-webkit-text-stroke:0.25px #fff;">Approve</span>
<div class="dot" style="left:1387.1px;top:741.6px;width:3.6px;height:3.6px"></div>
<div class="dot" style="left:1387.1px;top:747.6px;width:3.6px;height:3.6px"></div>
<div class="dot" style="left:1387.1px;top:753.6px;width:3.6px;height:3.6px"></div>
<div class="abs" style="left:78px;top:830px;width:1345px;height:56px;background:#fff;border-top:1px solid #dee2e6"></div>
<div class="sel" style="left:85px;top:844px;width:80px;height:30px"></div>
<span class="t" style="left:96.7px;top:853px;font-size:12px;color:#000;font-weight:400;letter-spacing:-0.6px;-webkit-text-stroke:0.25px #000;">20</span>
<svg style="left:143.6px;top:852.85px;stroke:#868e96;stroke-width:2;" width="12" height="12" viewBox="0 0 24 24"><path d="m8 9 4-4 4 4"/><path d="m16 15-4 4-4-4"/></svg>
<span class="t" style="left:184.5px;top:849px;font-size:16px;color:#212529;font-weight:400;letter-spacing:0.467px;-webkit-text-stroke:0.22px #212529;">Showing 20 of 116 results</span>
<div class="abs" style="left:1073px;top:200px;width:240px;height:337px;background:#fff;border:1px solid #e9ecef;border-radius:5px;box-shadow:0 1px 3px rgba(0,0,0,.05),0 20px 25px -5px rgba(0,0,0,.08),0 10px 10px -5px rgba(0,0,0,.04)"></div>
<span class="t" style="left:1093.9px;top:211px;font-size:13px;color:#0b8a66;font-weight:400;letter-spacing:0.386px;-webkit-text-stroke:0.6px #0b8a66;">Hide all</span>
<span class="t" style="left:1156.2px;top:211px;font-size:13px;color:#0b8a66;font-weight:400;letter-spacing:0.1px;-webkit-text-stroke:0.6px #0b8a66;">Reset order</span>
<span class="t" style="left:1241.4px;top:211px;font-size:13px;color:#0b8a66;font-weight:400;letter-spacing:0.171px;-webkit-text-stroke:0.6px #0b8a66;">Show all</span>
<div class="hl" style="left:1074px;top:235px;width:238px;background:#e3e6ea"></div>
<div class="abs" style="left:1081px;top:239.5px;width:25.5px;height:25.5px;border:3px solid #e03131;border-radius:7px"></div>
<svg style="left:1086px;top:244px;stroke:#a5adb8;stroke-width:1.8;" width="16" height="16" viewBox="0 0 24 24"><circle cx="9" cy="5" r="1"/><circle cx="9" cy="12" r="1"/><circle cx="9" cy="19" r="1"/><circle cx="15" cy="5" r="1"/><circle cx="15" cy="12" r="1"/><circle cx="15" cy="19" r="1"/></svg>
<div class="sw" style="left:1106px;top:242px"><i></i><b></b></div>
<span class="t" style="left:1156.7px;top:245px;font-size:14px;color:#212529;font-weight:400;letter-spacing:0.56px;-webkit-text-stroke:0.22px #212529;">Vendor</span>
<svg style="left:1086px;top:274px;stroke:#a5adb8;stroke-width:1.8;" width="16" height="16" viewBox="0 0 24 24"><circle cx="9" cy="5" r="1"/><circle cx="9" cy="12" r="1"/><circle cx="9" cy="19" r="1"/><circle cx="15" cy="5" r="1"/><circle cx="15" cy="12" r="1"/><circle cx="15" cy="19" r="1"/></svg>
<div class="sw" style="left:1106px;top:272px"><i></i><b></b></div>
<span class="t" style="left:1156.2px;top:275px;font-size:14px;color:#212529;font-weight:400;letter-spacing:0.68px;-webkit-text-stroke:0.22px #212529;">Description</span>
<svg style="left:1086px;top:304px;stroke:#a5adb8;stroke-width:1.8;" width="16" height="16" viewBox="0 0 24 24"><circle cx="9" cy="5" r="1"/><circle cx="9" cy="12" r="1"/><circle cx="9" cy="19" r="1"/><circle cx="15" cy="5" r="1"/><circle cx="15" cy="12" r="1"/><circle cx="15" cy="19" r="1"/></svg>
<div class="sw" style="left:1106px;top:302px"><i></i><b></b></div>
<span class="t" style="left:1156.7px;top:305px;font-size:14px;color:#212529;font-weight:400;letter-spacing:0.729px;-webkit-text-stroke:0.22px #212529;">Category</span>
<svg style="left:1086px;top:334px;stroke:#a5adb8;stroke-width:1.8;" width="16" height="16" viewBox="0 0 24 24"><circle cx="9" cy="5" r="1"/><circle cx="9" cy="12" r="1"/><circle cx="9" cy="19" r="1"/><circle cx="15" cy="5" r="1"/><circle cx="15" cy="12" r="1"/><circle cx="15" cy="19" r="1"/></svg>
<div class="sw" style="left:1106px;top:332px"><i></i><b></b></div>
<span class="t" style="left:1156.2px;top:335px;font-size:14px;color:#212529;font-weight:400;letter-spacing:1.167px;-webkit-text-stroke:0.22px #212529;">Date</span>
<svg style="left:1086px;top:364px;stroke:#a5adb8;stroke-width:1.8;" width="16" height="16" viewBox="0 0 24 24"><circle cx="9" cy="5" r="1"/><circle cx="9" cy="12" r="1"/><circle cx="9" cy="19" r="1"/><circle cx="15" cy="5" r="1"/><circle cx="15" cy="12" r="1"/><circle cx="15" cy="19" r="1"/></svg>
<div class="sw" style="left:1106px;top:362px"><i></i><b></b></div>
<span class="t" style="left:1156.7px;top:365px;font-size:14px;color:#212529;font-weight:400;letter-spacing:-0.5px;-webkit-text-stroke:0.22px #212529;">$</span>
<svg style="left:1086px;top:394px;stroke:#a5adb8;stroke-width:1.8;" width="16" height="16" viewBox="0 0 24 24"><circle cx="9" cy="5" r="1"/><circle cx="9" cy="12" r="1"/><circle cx="9" cy="19" r="1"/><circle cx="15" cy="5" r="1"/><circle cx="15" cy="12" r="1"/><circle cx="15" cy="19" r="1"/></svg>
<div class="sw" style="left:1106px;top:392px"><i></i><b></b></div>
<span class="t" style="left:1156.2px;top:395px;font-size:14px;color:#212529;font-weight:400;letter-spacing:0.2px;-webkit-text-stroke:0.22px #212529;">Docs</span>
<svg style="left:1086px;top:424px;stroke:#a5adb8;stroke-width:1.8;" width="16" height="16" viewBox="0 0 24 24"><circle cx="9" cy="5" r="1"/><circle cx="9" cy="12" r="1"/><circle cx="9" cy="19" r="1"/><circle cx="15" cy="5" r="1"/><circle cx="15" cy="12" r="1"/><circle cx="15" cy="19" r="1"/></svg>
<div class="sw" style="left:1106px;top:422px"><i></i><b></b></div>
<span class="t" style="left:1156.2px;top:425px;font-size:14px;color:#212529;font-weight:400;letter-spacing:0.511px;-webkit-text-stroke:0.22px #212529;">Bill &amp; Tax</span>
<svg style="left:1086px;top:454px;stroke:#a5adb8;stroke-width:1.8;" width="16" height="16" viewBox="0 0 24 24"><circle cx="9" cy="5" r="1"/><circle cx="9" cy="12" r="1"/><circle cx="9" cy="19" r="1"/><circle cx="15" cy="5" r="1"/><circle cx="15" cy="12" r="1"/><circle cx="15" cy="19" r="1"/></svg>
<div class="sw" style="left:1106px;top:452px"><i></i><b></b></div>
<span class="t" style="left:1156.7px;top:455px;font-size:14px;color:#212529;font-weight:400;letter-spacing:-0.225px;-webkit-text-stroke:0.22px #212529;">Class</span>
<svg style="left:1086px;top:484px;stroke:#a5adb8;stroke-width:1.8;" width="16" height="16" viewBox="0 0 24 24"><circle cx="9" cy="5" r="1"/><circle cx="9" cy="12" r="1"/><circle cx="9" cy="19" r="1"/><circle cx="15" cy="5" r="1"/><circle cx="15" cy="12" r="1"/><circle cx="15" cy="19" r="1"/></svg>
<div class="sw" style="left:1106px;top:482px"><i></i><b></b></div>
<span class="t" style="left:1156.2px;top:485px;font-size:14px;color:#212529;font-weight:400;letter-spacing:0.829px;-webkit-text-stroke:0.22px #212529;">Location</span>
<svg style="left:1086px;top:514px;stroke:#a5adb8;stroke-width:1.8;" width="16" height="16" viewBox="0 0 24 24"><circle cx="9" cy="5" r="1"/><circle cx="9" cy="12" r="1"/><circle cx="9" cy="19" r="1"/><circle cx="15" cy="5" r="1"/><circle cx="15" cy="12" r="1"/><circle cx="15" cy="19" r="1"/></svg>
<div class="sw" style="left:1106px;top:512px"><i></i><b></b></div>
<span class="t" style="left:1156.7px;top:515px;font-size:14px;color:#212529;font-weight:400;letter-spacing:0.5px;-webkit-text-stroke:0.22px #212529;">Customer</span>
<div class="abs" style="left:1218px;top:119px;width:156px;height:32px;border-radius:4px;background:#0b8a66"></div>
<div class="abs" style="left:1293.4px;top:147.1px;width:5px;height:5px;background:#0b8a66;transform:rotate(45deg);border-radius:1px"></div>
<span class="t" style="left:1228px;top:127px;font-size:14px;color:#fff;font-weight:400;letter-spacing:0.7px;-webkit-text-stroke:0.22px #fff;">Show/Hide columns</span>
</div></body></html>
